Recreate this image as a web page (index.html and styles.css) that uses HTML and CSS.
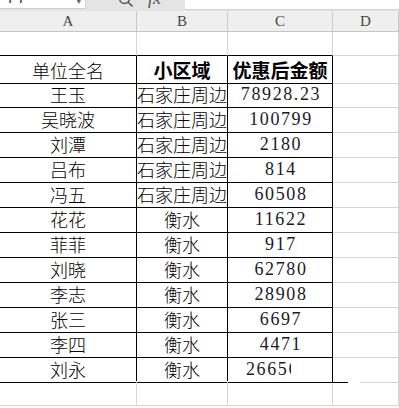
FILE: index.html
```html
<!DOCTYPE html>
<html lang="zh">
<head>
<meta charset="utf-8">
<title>Sheet</title>
<link rel="stylesheet" href="styles.css">
</head>
<body>
<div class="sheet">
  <div class="topbar">
    <div class="namebox"><span class="name">F7</span><span class="caret">▾</span></div>
    <div class="tools">
      <svg class="search" width="16" height="16" viewBox="0 0 16 16"><circle cx="6.5" cy="6.5" r="5" fill="none" stroke="#555" stroke-width="1.4"/><line x1="10" y1="10" x2="14.5" y2="14.5" stroke="#555" stroke-width="1.6"/></svg>
      <span class="fx">fx</span>
    </div>
    <div class="formula"></div>
  </div>

  <div class="row colhead">
    <div class="cell">A</div><div class="cell">B</div><div class="cell">C</div><div class="cell">D</div>
  </div>

  <div class="row r1">
    <div class="cell tb"></div><div class="cell tb"></div><div class="cell tb"></div><div class="cell"></div>
  </div>

  <div class="row data">
    <div class="cell t">单位全名</div><div class="cell t bold">小区域</div><div class="cell t bold">优惠后金额</div><div class="cell"></div>
  </div>
  <div class="row data">
    <div class="cell t">王玉</div><div class="cell t left">石家庄周边</div><div class="cell t num">78928.23</div><div class="cell"></div>
  </div>
  <div class="row data">
    <div class="cell t">吴晓波</div><div class="cell t left">石家庄周边</div><div class="cell t num">100799</div><div class="cell"></div>
  </div>
  <div class="row data">
    <div class="cell t">刘潭</div><div class="cell t left">石家庄周边</div><div class="cell t num">2180</div><div class="cell"></div>
  </div>
  <div class="row data">
    <div class="cell t">吕布</div><div class="cell t left">石家庄周边</div><div class="cell t num">814</div><div class="cell"></div>
  </div>
  <div class="row data">
    <div class="cell t">冯五</div><div class="cell t left">石家庄周边</div><div class="cell t num">60508</div><div class="cell"></div>
  </div>
  <div class="row data">
    <div class="cell t">花花</div><div class="cell t">衡水</div><div class="cell t num">11622</div><div class="cell"></div>
  </div>
  <div class="row data">
    <div class="cell t">菲菲</div><div class="cell t">衡水</div><div class="cell t num">917</div><div class="cell"></div>
  </div>
  <div class="row data">
    <div class="cell t">刘晓</div><div class="cell t">衡水</div><div class="cell t num">62780</div><div class="cell"></div>
  </div>
  <div class="row data">
    <div class="cell t">李志</div><div class="cell t">衡水</div><div class="cell t num">28908</div><div class="cell"></div>
  </div>
  <div class="row data">
    <div class="cell t">张三</div><div class="cell t">衡水</div><div class="cell t num">6697</div><div class="cell"></div>
  </div>
  <div class="row data">
    <div class="cell t">李四</div><div class="cell t">衡水</div><div class="cell t num">4471</div><div class="cell"></div>
  </div>
  <div class="row data last">
    <div class="cell t">刘永</div><div class="cell t">衡水</div><div class="cell t num shifted">26656<span class="glitch"></span><span class="tail"></span></div><div class="cell"></div>
  </div>
  <div class="row empty">
    <div class="cell"></div><div class="cell"></div><div class="cell"></div><div class="cell"></div>
  </div>
</div>
</body>
</html>
```

FILE: styles.css
```css
* { box-sizing: border-box; }
html, body { margin: 0; padding: 0; background: #fff; }
body { width: 399px; height: 408px; overflow: hidden; }

.sheet {
  width: 399px;
  font-family: "Noto Sans CJK SC", sans-serif;
}

/* top toolbar strip (mostly cut off) */
.topbar {
  height: 11px;
  display: flex;
  background: #e4e4e4;
  overflow: hidden;
}
.namebox {
  width: 86px;
  height: 9px;
  background: #fff;
  border-bottom: 1px solid #cfcfcf;
  border-right: 1px solid #d6d6d6;
  position: relative;
  overflow: hidden;
}
.name {
  position: absolute;
  left: 8px;
  top: -9px;
  font-family: "Liberation Mono", monospace;
  font-size: 15px;
  color: #333;
}
.caret {
  position: absolute;
  left: 76px;
  top: -9px;
  font-size: 11px;
  color: #666;
}
.tools {
  width: 99px;
  height: 11px;
  position: relative;
  overflow: hidden;
}
.search { position: absolute; left: 32px; top: -8px; }
.fx {
  position: absolute;
  left: 62px;
  top: -12px;
  font-family: "Liberation Serif", serif;
  font-style: italic;
  font-size: 18px;
  color: #555;
}
.formula {
  flex: 1;
  height: 10px;
  background: #fff;
  border-bottom: 1px solid #d2d2d2;
}

/* grid rows */
.row {
  display: grid;
  grid-template-columns: 137px 91px 105px 1fr;
}
.cell {
  border-right: 1px solid #d4d4d4;
  border-bottom: 1px solid #d4d4d4;
  display: flex;
  align-items: center;
  justify-content: center;
  white-space: nowrap;
  min-width: 0;
}

.colhead { height: 21px; background: #efefef; }
.colhead .cell {
  border-right-color: #c9c9c9;
  border-bottom-color: #c6c6c6;
  font-family: "Liberation Serif", serif;
  font-size: 15px;
  color: #444;
  padding-top: 1px;
}

.r1 { height: 24px; }
.r1 .tb { border-bottom-color: #000; }

.data { height: 25px; }
.data .t {
  border-right-color: #000;
  border-bottom-color: #000;
  font-size: 18px;
  font-weight: 300;
  color: #000;
}
.data .bold { font-weight: 700; font-size: 19px; }
.data .left { justify-content: flex-start; }
.data .num {
  font-family: "Liberation Serif", serif;
  font-size: 18px;
  font-weight: 400;
  color: #1a1a2a;
  letter-spacing: 1.6px;
  padding-top: 1px;
  padding-left: 2px;
}
.data .shifted { justify-content: flex-start; padding-left: 18px; position: relative; }
.glitch {
  position: absolute;
  left: 63px;
  top: 2px;
  width: 22px;
  height: 20px;
  background: #fff;
}
.tail {
  position: absolute;
  left: 100%;
  bottom: -1px;
  width: 28px;
  height: 1px;
  background: linear-gradient(to right, #000 0 16px, #fff 16px 28px);
}

.empty { height: 25px; }
```
